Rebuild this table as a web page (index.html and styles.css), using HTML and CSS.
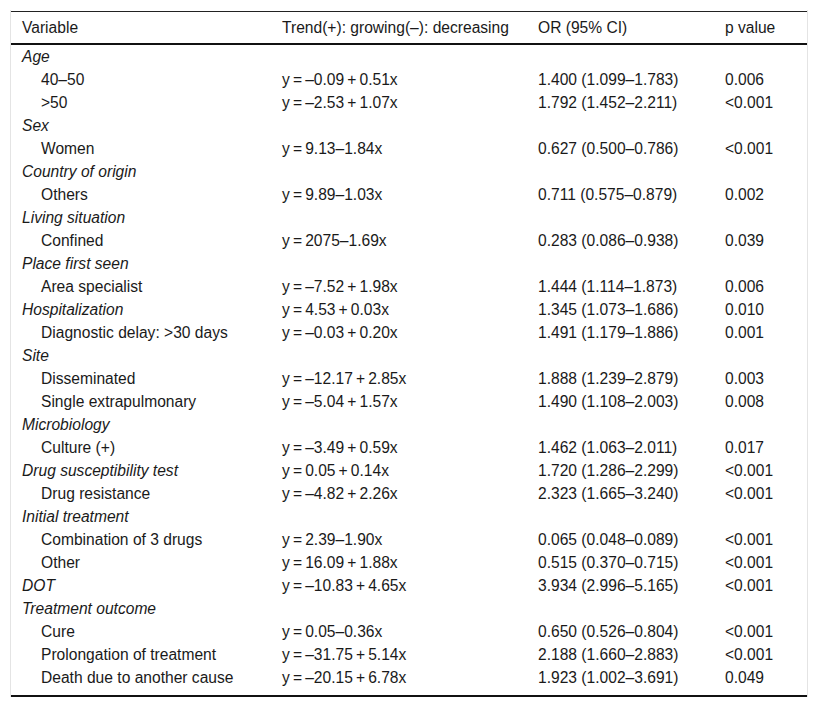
FILE: index.html
```html
<!DOCTYPE html>
<html>
<head>
<meta charset="utf-8">
<link rel="stylesheet" href="styles.css">
</head>
<body>
<div class="wrap">
<table class="data">
<colgroup><col class="c1"><col class="c2"><col class="c3"><col class="c4"></colgroup>
<thead>
<tr><th>Variable</th><th>Trend(+): growing(–): decreasing</th><th>OR (95% CI)</th><th>p value</th></tr>
</thead>
<tbody>
<tr><td class="grp">Age</td><td></td><td></td><td></td></tr>
<tr><td class="sub">40–50</td><td>y&thinsp;=&thinsp;–0.09&thinsp;+&thinsp;0.51x</td><td>1.400 (1.099–1.783)</td><td>0.006</td></tr>
<tr><td class="sub">&gt;50</td><td>y&thinsp;=&thinsp;–2.53&thinsp;+&thinsp;1.07x</td><td>1.792 (1.452–2.211)</td><td>&lt;0.001</td></tr>
<tr><td class="grp">Sex</td><td></td><td></td><td></td></tr>
<tr><td class="sub">Women</td><td>y&thinsp;=&thinsp;9.13–1.84x</td><td>0.627 (0.500–0.786)</td><td>&lt;0.001</td></tr>
<tr><td class="grp">Country of origin</td><td></td><td></td><td></td></tr>
<tr><td class="sub">Others</td><td>y&thinsp;=&thinsp;9.89–1.03x</td><td>0.711 (0.575–0.879)</td><td>0.002</td></tr>
<tr><td class="grp">Living situation</td><td></td><td></td><td></td></tr>
<tr><td class="sub">Confined</td><td>y&thinsp;=&thinsp;2075–1.69x</td><td>0.283 (0.086–0.938)</td><td>0.039</td></tr>
<tr><td class="grp">Place first seen</td><td></td><td></td><td></td></tr>
<tr><td class="sub">Area specialist</td><td>y&thinsp;=&thinsp;–7.52&thinsp;+&thinsp;1.98x</td><td>1.444 (1.114–1.873)</td><td>0.006</td></tr>
<tr><td class="grp">Hospitalization</td><td>y&thinsp;=&thinsp;4.53&thinsp;+&thinsp;0.03x</td><td>1.345 (1.073–1.686)</td><td>0.010</td></tr>
<tr><td class="sub">Diagnostic delay: &gt;30 days</td><td>y&thinsp;=&thinsp;–0.03&thinsp;+&thinsp;0.20x</td><td>1.491 (1.179–1.886)</td><td>0.001</td></tr>
<tr><td class="grp">Site</td><td></td><td></td><td></td></tr>
<tr><td class="sub">Disseminated</td><td>y&thinsp;=&thinsp;–12.17&thinsp;+&thinsp;2.85x</td><td>1.888 (1.239–2.879)</td><td>0.003</td></tr>
<tr><td class="sub">Single extrapulmonary</td><td>y&thinsp;=&thinsp;–5.04&thinsp;+&thinsp;1.57x</td><td>1.490 (1.108–2.003)</td><td>0.008</td></tr>
<tr><td class="grp">Microbiology</td><td></td><td></td><td></td></tr>
<tr><td class="sub">Culture (+)</td><td>y&thinsp;=&thinsp;–3.49&thinsp;+&thinsp;0.59x</td><td>1.462 (1.063–2.011)</td><td>0.017</td></tr>
<tr><td class="grp">Drug susceptibility test</td><td>y&thinsp;=&thinsp;0.05&thinsp;+&thinsp;0.14x</td><td>1.720 (1.286–2.299)</td><td>&lt;0.001</td></tr>
<tr><td class="sub">Drug resistance</td><td>y&thinsp;=&thinsp;–4.82&thinsp;+&thinsp;2.26x</td><td>2.323 (1.665–3.240)</td><td>&lt;0.001</td></tr>
<tr><td class="grp">Initial treatment</td><td></td><td></td><td></td></tr>
<tr><td class="sub">Combination of 3 drugs</td><td>y&thinsp;=&thinsp;2.39–1.90x</td><td>0.065 (0.048–0.089)</td><td>&lt;0.001</td></tr>
<tr><td class="sub">Other</td><td>y&thinsp;=&thinsp;16.09&thinsp;+&thinsp;1.88x</td><td>0.515 (0.370–0.715)</td><td>&lt;0.001</td></tr>
<tr><td class="grp">DOT</td><td>y&thinsp;=&thinsp;–10.83&thinsp;+&thinsp;4.65x</td><td>3.934 (2.996–5.165)</td><td>&lt;0.001</td></tr>
<tr><td class="grp">Treatment outcome</td><td></td><td></td><td></td></tr>
<tr><td class="sub">Cure</td><td>y&thinsp;=&thinsp;0.05–0.36x</td><td>0.650 (0.526–0.804)</td><td>&lt;0.001</td></tr>
<tr><td class="sub">Prolongation of treatment</td><td>y&thinsp;=&thinsp;–31.75&thinsp;+&thinsp;5.14x</td><td>2.188 (1.660–2.883)</td><td>&lt;0.001</td></tr>
<tr class="last"><td class="sub">Death due to another cause</td><td>y&thinsp;=&thinsp;–20.15&thinsp;+&thinsp;6.78x</td><td>1.923 (1.002–3.691)</td><td>0.049</td></tr>
</tbody>
</table>
</div>
</body>
</html>
```
FILE: styles.css
```css
html, body {
  margin: 0;
  padding: 0;
  background: #fff;
}
body {
  padding: 10px 10px 0 10px;
  font-family: "Liberation Sans", Arial, sans-serif;
  font-size: 15.6px;
  color: #1a1a1a;
}
.wrap {
  border-left: 1px solid #e4e4e4;
  border-right: 1px solid #e4e4e4;
  padding-top: 1px;
  width: 796px;
}
.data {
  border-collapse: collapse;
  table-layout: fixed;
  width: 796px;
  border-top: 1px solid #222;
  border-bottom: 2px solid #111;
}
.c1 { width: 260px; }
.c2 { width: 256px; }
.c3 { width: 187px; }
.c4 { width: 93px; }
th {
  font-weight: normal;
  text-align: left;
  height: 31px;
  padding: 0 0 0 11px;
  border-bottom: 2px solid #111;
  vertical-align: middle;
  line-height: 18px;
}
td {
  height: 23px;
  padding: 0 0 0 11px;
  vertical-align: middle;
  line-height: 18px;
  white-space: nowrap;
}
td.grp {
  font-style: italic;
}
td.sub {
  padding-left: 30px;
}
tr.last td {
  height: 26px;
  vertical-align: top;
  padding-top: 3px;
}
```
